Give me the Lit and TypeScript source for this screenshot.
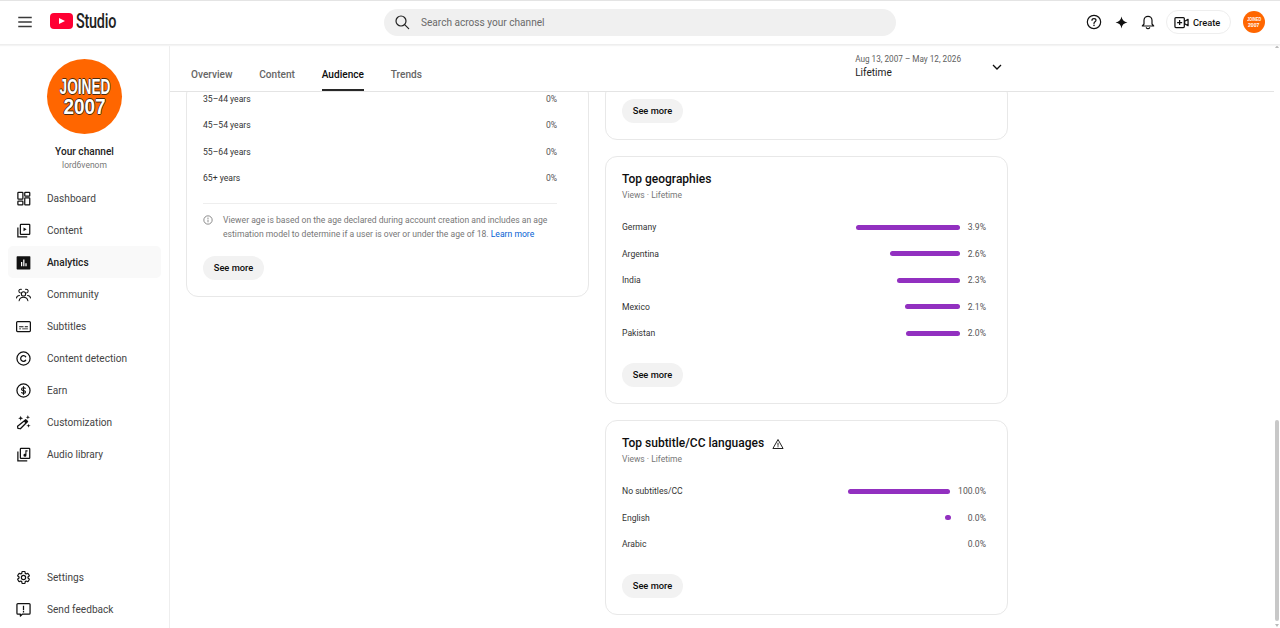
import { LitElement, html, css, svg } from 'lit';
import { customElement } from 'lit/decorators.js';

const icons: Record<string, unknown> = {
  dashboard: svg`<g fill="none" stroke="currentColor" stroke-width="2"><rect x="3" y="2" width="8" height="11" rx="1"/><rect x="3" y="16" width="8" height="6" rx="1"/><rect x="14" y="2" width="8" height="6" rx="1"/><rect x="14" y="11" width="8" height="11" rx="1"/></g>`,
  content: svg`<g fill="none" stroke="currentColor" stroke-width="2"><path d="M3 7v15h15"/><rect x="7" y="2" width="15" height="16" rx="1"/></g><path d="M12 7l5 3-5 3z" fill="currentColor"/>`,
  analytics: svg`<rect x="1" y="2" width="22" height="21" rx="1" fill="currentColor"/><path d="M8 11h2v7H8zM11.500 7h2v11h-2zM15 13h2v5h-2z" fill="#fff"/>`,
  community: svg`<g fill="none" stroke="currentColor" stroke-width="1.700" stroke-linecap="round"><circle cx="12" cy="11" r="3.400"/><path d="M5 22c.6-3.600 3.400-5.500 7-5.500s6.400 1.900 7 5.500"/><path d="M7 9.500C5.300 9 4.300 7.800 4.500 6.300 4.800 4.600 6.500 3.500 8.500 3.800"/><path d="M17 9.500c1.700-.5 2.700-1.700 2.500-3.200-.3-1.700-2-2.800-4-2.500"/><path d="M.8 17.500C1.300 15 3 13.500 5.500 13.500M23.200 17.500c-.5-2.500-2.200-4-4.700-4"/></g>`,
  subtitles: svg`<rect x="1" y="4" width="22" height="16" rx="1.500" fill="none" stroke="currentColor" stroke-width="2"/><path d="M5 11.500h7v1.500H5zM14 11.500h5v1.500h-5zM5 15h3v1.400H5zM10 15h9v1.400h-9z" fill="currentColor"/>`,
  detection: svg`<g fill="none" stroke="currentColor" stroke-width="2"><circle cx="12" cy="12" r="10.500"/><path d="M15.500 9.200A4.500 4.500 0 1 0 15.500 14.800" stroke-linecap="round"/></g>`,
  earn: svg`<g fill="none" stroke="currentColor" stroke-width="2"><circle cx="12" cy="12" r="10.500"/><path d="M15.200 9.300C14.800 8.200 13.600 7.600 12 7.600c-1.800 0-3.200.9-3.200 2.300 0 3 6.400 1.500 6.400 4.300 0 1.400-1.400 2.200-3.200 2.200-1.700 0-2.900-.7-3.300-1.900" stroke-width="1.800"/><path d="M12 5v14" stroke-width="1.800"/></g>`,
  custom: svg`<path d="M15.500 7.500l3 3L7 22l-4-.5L2.500 18z" fill="none" stroke="currentColor" stroke-width="2" stroke-linejoin="round"/><path d="M12.500 10.500l3.200 3.200 2.800-3.200-3-3z" fill="currentColor"/><path d="M7.500 1l1 2.800L11.500 5 8.500 6.200 7.500 9l-1-2.800L3.500 5l3-1.200zM19 0l.9 2.600L22.500 3.500l-2.600.9L19 7l-.9-2.600-2.600-.9 2.600-.9zM20 14l.8 2.400 2.700.8-2.700.8L20 20.500l-.8-2.500-2.700-.8 2.700-.8z" fill="currentColor"/>`,
  audio: svg`<g fill="none" stroke="currentColor" stroke-width="2"><path d="M3 7v15h15"/><rect x="7" y="2" width="15" height="16" rx="1"/></g><path d="M15 5h3.500v2.300h-1.800V13a2.400 2.400 0 1 1-1.700-2.200z" fill="currentColor"/>`,
  settings: svg`<path d="M19.140 12.940c.04-.3.06-.61.06-.94 0-.32-.02-.64-.07-.94l2.030-1.580c.18-.14.23-.41.12-.61l-1.920-3.320c-.12-.22-.37-.29-.59-.22l-2.390.96c-.5-.38-1.030-.7-1.620-.94l-.36-2.540c-.04-.24-.24-.41-.48-.41h-3.840c-.24 0-.43.17-.47.41l-.36 2.540c-.59.24-1.130.57-1.620.94l-2.390-.96c-.22-.08-.47 0-.59.22L2.740 8.870c-.12.21-.08.47.12.61l2.030 1.580c-.05.3-.09.63-.09.94s.02.64.07.94l-2.030 1.580c-.18.14-.23.41-.12.61l1.920 3.320c.12.22.37.29.59.22l2.390-.96c.5.38 1.030.7 1.620.94l.36 2.540c.05.24.24.41.48.41h3.840c.24 0 .44-.17.47-.41l.36-2.540c.59-.24 1.130-.56 1.620-.94l2.390.96c.22.08.47 0 .59-.22l1.920-3.320c.12-.22.07-.47-.12-.61l-2.010-1.580z" fill="none" stroke="currentColor" stroke-width="1.900"/><circle cx="12" cy="12" r="3.400" fill="none" stroke="currentColor" stroke-width="1.900"/>`,
  feedback: svg`<path d="M3 2.500h18A1.500 1.500 0 0 1 22.500 4v14a1.500 1.500 0 0 1-1.500 1.500H10L7 22.500v-3H3A1.500 1.500 0 0 1 1.500 18V4A1.500 1.500 0 0 1 3 2.500z" fill="none" stroke="currentColor" stroke-width="2" stroke-linejoin="round"/><path d="M11 6h2v7h-2zM11 14.400h2v2.300h-2z" fill="currentColor"/>`,
  menu: svg`<path d="M3 5h18v2H3zM3 11h18v2H3zM3 17h18v2H3z" fill="currentColor"/>`,
  search: svg`<g fill="none" stroke="currentColor" stroke-width="1.800" stroke-linecap="round"><circle cx="10.500" cy="10.500" r="7.500"/><path d="M16 16l6 6"/></g>`,
  help: svg`<g fill="none" stroke="currentColor" stroke-width="1.800"><circle cx="12" cy="12" r="10"/><path d="M9 9.500C9 7.800 10.300 6.800 12 6.800s3 1 3 2.600c0 2.300-3 2.300-3 4.800" stroke-linecap="round"/></g><circle cx="12" cy="17" r="1.200" fill="currentColor"/>`,
  spark: svg`<path d="M12 1c1 6.500 4.500 10 11 11-6.500 1-10 4.500-11 11-1-6.500-4.500-10-11-11 6.500-1 10-4.500 11-11z" fill="currentColor"/>`,
  bell: svg`<g fill="none" stroke="currentColor" stroke-width="1.800" stroke-linejoin="round"><path d="M3.500 18h17l-2.500-3V9.500a6 6 0 0 0-12 0V15z"/><path d="M9.500 20.500c.5 1 1.400 1.500 2.500 1.500s2-.5 2.500-1.500" stroke-linecap="round"/></g>`,
  create: svg`<g fill="none" stroke="currentColor" stroke-width="2"><rect x="1.500" y="4" width="15" height="16" rx="1.500"/><path d="M9 8v8M5 12h8"/><path d="M17 10l5.500-3v10L17 14z" stroke-linejoin="round"/></g>`,
  chevron: svg`<path d="M4 8l8 8 8-8" fill="none" stroke="currentColor" stroke-width="2.600"/>`,
  info: svg`<g fill="none" stroke="currentColor" stroke-width="1.800"><circle cx="12" cy="12" r="10"/><path d="M12 11v6.500"/></g><circle cx="12" cy="7.500" r="1.300" fill="currentColor"/>`,
  warning: svg`<path d="M12 3L1.800 21h20.400z" fill="none" stroke="currentColor" stroke-width="2" stroke-linejoin="round"/><path d="M11 9.500h2v6h-2zM11 16.700h2v2h-2z" fill="currentColor"/>`,
};

const icon = (name: string, size: number) =>
  html`<svg viewBox="0 0 24 24" width=${size} height=${size}>${icons[name]}</svg>`;

const navItems = [
  { icon: 'dashboard', label: 'Dashboard' },
  { icon: 'content', label: 'Content' },
  { icon: 'analytics', label: 'Analytics', active: true },
  { icon: 'community', label: 'Community' },
  { icon: 'subtitles', label: 'Subtitles' },
  { icon: 'detection', label: 'Content detection' },
  { icon: 'earn', label: 'Earn' },
  { icon: 'custom', label: 'Customization' },
  { icon: 'audio', label: 'Audio library' },
];

const ages = ['35–44 years', '45–54 years', '55–64 years', '65+ years'];

const geographies = [
  { label: 'Germany', value: '3.9%', bar: 104 },
  { label: 'Argentina', value: '2.6%', bar: 70 },
  { label: 'India', value: '2.3%', bar: 63 },
  { label: 'Mexico', value: '2.1%', bar: 55 },
  { label: 'Pakistan', value: '2.0%', bar: 54 },
];

const languages = [
  { label: 'No subtitles/CC', value: '100.0%', bar: 102 },
  { label: 'English', value: '0.0%', bar: 6 },
  { label: 'Arabic', value: '0.0%', bar: 0 },
];

@customElement('app-root')
export class AppRoot extends LitElement {
  static styles = css`
    :host {
      display: block;
      position: relative;
      height: 628px;
      overflow: hidden;
      background: #fff;
      color: #0d0d0d;
      font-family: Roboto, 'Liberation Sans', sans-serif;
      font-size: 10.1px;
    }
    svg {
      display: block;
      flex: none;
    }

    .topbar {
      display: flex;
      align-items: center;
      height: 42px;
      padding-bottom: 1px;
      border-top: 1px solid #e4e4e4;
      border-bottom: 1px solid #eeeeee;
      box-shadow: 0 1px 1px #f4f4f4;
      position: relative;
      z-index: 1;
    }
    .menu {
      margin-left: 16px;
      color: #3a3a3a;
    }
    .logo {
      display: flex;
      align-items: center;
      margin: -2px 0 0 16px;
      width: 334px;
    }
    .logo-mark {
      width: 23px;
      height: 16px;
      border-radius: 4px;
      background: #ff0033;
      display: flex;
      align-items: center;
      justify-content: center;
    }
    .logo-mark i {
      border-left: 6px solid #fff;
      border-top: 3.5px solid transparent;
      border-bottom: 3.5px solid transparent;
    }
    .logo-text {
      margin-left: 3px;
      font-size: 20px;
      font-weight: 500;
      letter-spacing: -0.3px;
      color: #222;
      transform: scaleX(0.72);
      transform-origin: left center;
    }
    .search {
      display: flex;
      align-items: center;
      width: 512px;
      height: 27px;
      border-radius: 14px;
      background: #f0f0f0;
      color: #6a6a6a;
      box-sizing: border-box;
      padding-left: 10px;
      gap: 11px;
    }
    .search svg {
      color: #222;
    }
    .actions {
      display: flex;
      align-items: center;
      margin-left: 190px;
      color: #111;
    }
    .actions .spark {
      margin-left: 13px;
    }
    .actions .bell {
      margin-left: 12px;
    }
    .create {
      display: flex;
      align-items: center;
      gap: 4px;
      margin-left: 10px;
      width: 65px;
      height: 24px;
      box-sizing: border-box;
      padding-left: 7px;
      border: 1px solid #eeeeee;
      border-radius: 12px;
      font-size: 9.300px;
      font-weight: 500;
    }

    .avatar {
      border-radius: 50%;
      background: #ff6600;
      color: #fff;
      display: flex;
      flex-direction: column;
      align-items: center;
      justify-content: center;
      font-family: 'Liberation Sans', sans-serif;
      font-weight: 700;
      flex: none;
      overflow: hidden;
    }
    .avatar.large {
      width: 75px;
      height: 75px;
      font-size: 22px;
      line-height: 20px;
      text-shadow: 1px 0 0 #4a2a10, -1px 0 0 #4a2a10, 0 1px 0 #4a2a10, 0 -1px 0 #4a2a10;
    }
    .avatar .joined {
      transform: scaleX(0.62);
    }
    .avatar .year {
      transform: scaleX(0.86);
    }
    .avatar.small {
      width: 22px;
      height: 22px;
      margin-left: 12px;
      font-size: 6px;
      line-height: 6px;
    }

    .body {
      display: flex;
      height: 584px;
    }
    .sidebar {
      width: 170px;
      box-sizing: border-box;
      border-right: 1px solid #eeeeee;
      display: flex;
      flex-direction: column;
      flex: none;
      padding-top: 14px;
    }
    .channel {
      display: flex;
      flex-direction: column;
      align-items: center;
    }
    .channel-name {
      margin-top: 11px;
      font-weight: 500;
      line-height: 13px;
      color: #222;
    }
    .channel-handle {
      margin-top: 1px;
      font-size: 8.500px;
      line-height: 12px;
      color: #777;
    }
    nav {
      margin-top: 11px;
      padding: 0 8px;
    }
    .nav-item {
      display: flex;
      align-items: center;
      height: 32px;
      padding-left: 8px;
      gap: 16px;
      border-radius: 5px;
      color: #444;
    }
    .nav-item svg {
      color: #111;
    }
    .nav-item.active {
      background: #f9f9f9;
      color: #222;
      font-weight: 500;
    }
    .nav-bottom {
      margin-top: auto;
      padding-bottom: 4px;
    }

    main {
      flex: 1;
      min-width: 0;
      display: flex;
      flex-direction: column;
    }
    .tabbar {
      flex: none;
      height: 47px;
      margin-right: 6px;
      box-sizing: border-box;
      border-bottom: 1px solid #e4e4e4;
      padding-left: 21px;
      position: relative;
      z-index: 1;
    }
    .tabbar-inner {
      width: 812px;
      height: 100%;
      display: flex;
      align-items: flex-end;
      justify-content: space-between;
    }
    .tabs {
      display: flex;
      gap: 26.800px;
    }
    .tab {
      font-weight: 500;
      line-height: 12px;
      padding: 12px 0 8px;
      border-bottom: 2px solid transparent;
      color: #666;
    }
    .tab.active {
      color: #0d0d0d;
      border-bottom-color: #282828;
    }
    .range {
      display: flex;
      align-items: center;
      gap: 30px;
      align-self: flex-start;
      padding-top: 8px;
    }
    .range svg {
      margin-top: 2px;
    }
    .range-dates {
      font-size: 8.200px;
      line-height: 13px;
      color: #606060;
    }
    .range-name {
      line-height: 13px;
      color: #222;
    }

    .scroller {
      flex: 1;
      min-height: 0;
      overflow: hidden;
    }
    .columns {
      display: grid;
      grid-template-columns: 403px 403px;
      gap: 16px;
      align-items: start;
      margin: -10px 0 0 16px;
    }
    .column {
      display: flex;
      flex-direction: column;
      gap: 16px;
    }
    .card {
      border: 1px solid #e8e8e8;
      border-radius: 12px;
      padding: 14px 16px 16px;
    }
    .card.age {
      padding-top: 2.500px;
    }
    .card.age .see-more {
      margin-top: 15px;
    }
    .card.stub {
      padding-top: 16px;
    }
    .card-title {
      display: flex;
      align-items: center;
      gap: 8px;
      font-size: 12px;
      font-weight: 500;
      line-height: 17px;
    }
    .card-title svg {
      color: #222;
    }
    .card-sub {
      font-size: 8.500px;
      line-height: 14px;
      color: #777;
      margin-bottom: 12px;
    }
    .age-list {
      padding-right: 15px;
    }
    .row {
      display: flex;
      align-items: center;
      height: 26.500px;
      font-size: 8.600px;
      color: #333;
    }
    .row .label {
      flex: 1;
    }
    .bars {
      padding-right: 5px;
    }
    .bar {
      height: 5px;
      border-radius: 3px;
      background: #9230c0;
      margin-right: 8px;
    }
    .value {
      color: #555;
      text-align: right;
    }
    .bars .value {
      min-width: 18px;
    }
    .bars.wide .value {
      min-width: 27px;
    }
    .divider {
      height: 1px;
      background: #eeeeee;
      margin: 11.500px 0 10px;
    }
    .note {
      display: flex;
      gap: 10px;
      font-size: 8.600px;
      line-height: 13.500px;
      color: #777;
    }
    .note svg {
      margin-top: 1px;
      color: #666;
    }
    .note a {
      color: #065fd4;
      text-decoration: none;
    }
    .see-more {
      width: 61px;
      height: 24px;
      box-sizing: border-box;
      padding-bottom: 1px;
      border-radius: 12px;
      background: #f2f2f2;
      font-size: 9.300px;
      font-weight: 500;
      color: #0d0d0d;
      display: flex;
      align-items: center;
      justify-content: center;
      margin-top: 16.500px;
    }
    .stub .see-more {
      margin-top: 0;
    }

    .scroll-thumb {
      position: absolute;
      right: 1px;
      top: 420px;
      width: 4px;
      height: 201px;
      border-radius: 2px;
      background: #c8c8c8;
    }
    .scroll-arrow {
      position: absolute;
      right: 1px;
      width: 0;
      height: 0;
      border-left: 2px solid transparent;
      border-right: 2px solid transparent;
    }
    .scroll-arrow.up {
      top: 45px;
      border-bottom: 3px solid #bbbbbb;
    }
    .scroll-arrow.down {
      top: 624px;
      border-top: 3px solid #bbbbbb;
    }
  `;

  private renderRows(rows: { label: string; value: string; bar: number }[], wide = false) {
    return html`<div class="bars ${wide ? 'wide' : ''}">
      ${rows.map(
        (r) => html`<div class="row">
          <span class="label">${r.label}</span>
          ${r.bar ? html`<div class="bar" style="width:${r.bar}px"></div>` : ''}
          <span class="value">${r.value}</span>
        </div>`
      )}
    </div>`;
  }

  render() {
    return html`
      <header class="topbar">
        <span class="menu">${icon('menu', 18)}</span>
        <div class="logo">
          <div class="logo-mark"><i></i></div>
          <span class="logo-text">Studio</span>
        </div>
        <div class="search">${icon('search', 16)}<span>Search across your channel</span></div>
        <div class="actions">
          ${icon('help', 16)}
          <span class="spark">${icon('spark', 13)}</span>
          <span class="bell">${icon('bell', 16)}</span>
          <div class="create">${icon('create', 15)}<span>Create</span></div>
          <div class="avatar small"><span class="joined">JOINED</span><span class="year">2007</span></div>
        </div>
      </header>
      <div class="body">
        <aside class="sidebar">
          <div class="channel">
            <div class="avatar large"><span class="joined">JOINED</span><span class="year">2007</span></div>
            <div class="channel-name">Your channel</div>
            <div class="channel-handle">lord6venom</div>
          </div>
          <nav>
            ${navItems.map(
              (n) => html`<div class="nav-item ${n.active ? 'active' : ''}">
                ${icon(n.icon, 15)}<span>${n.label}</span>
              </div>`
            )}
          </nav>
          <nav class="nav-bottom">
            <div class="nav-item">${icon('settings', 15)}<span>Settings</span></div>
            <div class="nav-item">${icon('feedback', 15)}<span>Send feedback</span></div>
          </nav>
        </aside>
        <main>
          <div class="tabbar">
            <div class="tabbar-inner">
              <div class="tabs">
                <span class="tab">Overview</span>
                <span class="tab">Content</span>
                <span class="tab active">Audience</span>
                <span class="tab">Trends</span>
              </div>
              <div class="range">
                <div>
                  <div class="range-dates">Aug 13, 2007 – May 12, 2026</div>
                  <div class="range-name">Lifetime</div>
                </div>
                ${icon('chevron', 12)}
              </div>
            </div>
          </div>
          <div class="scroller">
            <div class="columns">
              <div class="column">
                <section class="card age">
                  <div class="age-list">
                    ${ages.map(
                      (a) => html`<div class="row">
                        <span class="label">${a}</span><span class="value">0%</span>
                      </div>`
                    )}
                    <div class="divider"></div>
                    <div class="note">
                      ${icon('info', 10)}
                      <span>Viewer age is based on the age declared during account creation and includes an age estimation model to determine if a user is over or under the age of 18. <a>Learn more</a></span>
                    </div>
                  </div>
                  <div class="see-more">See more</div>
                </section>
              </div>
              <div class="column">
                <section class="card stub"><div class="see-more">See more</div></section>
                <section class="card">
                  <div class="card-title">Top geographies</div>
                  <div class="card-sub">Views · Lifetime</div>
                  ${this.renderRows(geographies)}
                  <div class="see-more">See more</div>
                </section>
                <section class="card">
                  <div class="card-title">Top subtitle/CC languages ${icon('warning', 12)}</div>
                  <div class="card-sub">Views · Lifetime</div>
                  ${this.renderRows(languages, true)}
                  <div class="see-more">See more</div>
                </section>
              </div>
            </div>
          </div>
        </main>
      </div>
      <div class="scroll-thumb"></div>
      <div class="scroll-arrow up"></div>
      <div class="scroll-arrow down"></div>
    `;
  }
}
